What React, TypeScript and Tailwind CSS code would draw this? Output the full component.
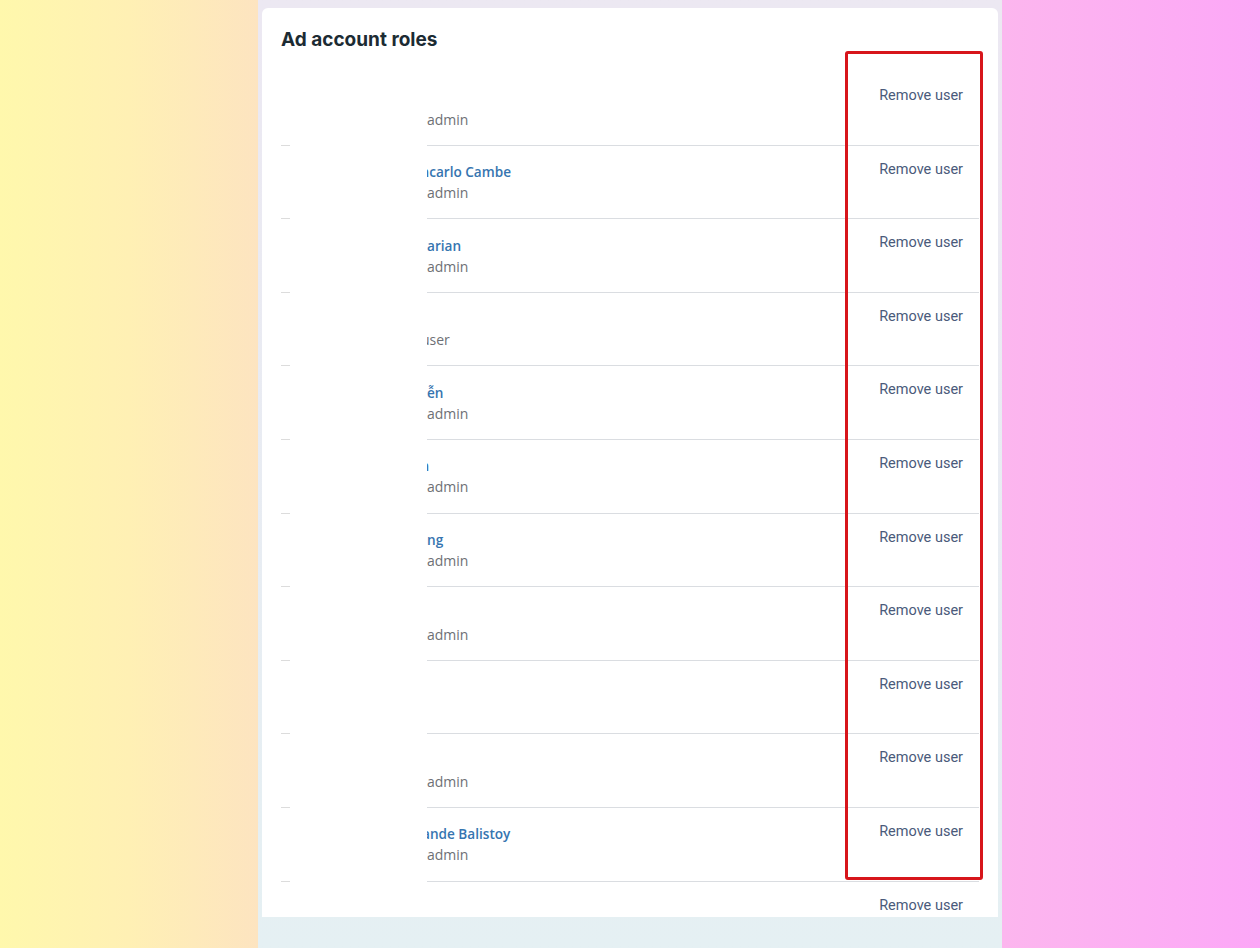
import React from "react";

type Row = { name?: string; nameShift?: number; role?: string; roleShift?: number };

const rows: Row[] = [
  { role: "admin" },
  { name: "ncarlo Cambe", nameShift: -6.5, role: "admin" },
  { name: "arian", role: "admin" },
  { role: "user", roleShift: -6 },
  { name: "ễn", role: "admin" },
  { name: "n", nameShift: -6.5, role: "admin" },
  { name: "ng", role: "admin" },
  { role: "admin" },
  {},
  { role: "admin" },
  { name: "ande Balistoy", nameShift: -5, role: "admin" },
  {},
];

function UserRow({ row }: { row: Row }) {
  return (
    <div className="relative h-[73.6px] shrink-0 flex flex-col">
      <div className="flex flex-1">
        <div className="w-[146px] shrink-0" />
        <div className="flex-1 overflow-hidden pt-[15.5px]" style={{ fontFamily: '"Open Sans", sans-serif' }}>
          <div className="h-[21px] leading-[21px] text-[13.6px] font-semibold text-[#3675b0] whitespace-nowrap">
            {row.name ? <span className="inline-block" style={{ marginLeft: row.nameShift ?? 0 }}>{row.name}</span> : null}
          </div>
          <div className="h-[21px] leading-[21px] text-[14px] text-[#6e7075] whitespace-nowrap">
            {row.role ? <span className="inline-block" style={{ marginLeft: row.roleShift ?? 0 }}>{row.role}</span> : null}
          </div>
        </div>
        <div className="pt-[14px] pr-[16px]">
          <span
            className="block leading-[20px] text-[14.5px] text-[#4a5a7a]"
            style={{ fontFamily: 'Roboto, sans-serif' }}
          >
            Remove user
          </span>
        </div>
      </div>
      <div className="flex h-px">
        <div className="w-[9px] bg-[#dcdcdc]" />
        <div className="w-[137px]" />
        <div className="flex-1 bg-[#dadde1]" />
      </div>
    </div>
  );
}

export default function App() {
  return (
    <div className="flex h-[948px] w-full overflow-hidden">
      <div className="w-[258px] shrink-0 bg-gradient-to-r from-[#fff8ac] via-[#fff0b4] to-[#fde4c0]" />
      <div className="w-[744px] shrink-0 bg-gradient-to-b from-[#ece8f2] to-[#e5f0f3] pt-[8px] px-[4px]">
        <div className="relative h-[909px] bg-white rounded-t-[6px] overflow-hidden pl-[19px] pr-[19px]">
          <h1
            className="pt-[20px] h-[64px] text-[19px] leading-[24px] font-bold text-[#1c2b33]"
            style={{ fontFamily: 'Inter, "Liberation Sans", sans-serif' }}
          >
            Ad account roles
          </h1>
          <div className="flex flex-col">
            {rows.map((r, i) => (
              <UserRow key={i} row={r} />
            ))}
          </div>
          <div className="absolute left-[583px] top-[43px] w-[138px] h-[829px] border-[3px] border-[#d7151b] rounded-[3px]" />
        </div>
      </div>
      <div className="flex-1 bg-gradient-to-r from-[#fcb6ee] to-[#fca7f7]" />
    </div>
  );
}
